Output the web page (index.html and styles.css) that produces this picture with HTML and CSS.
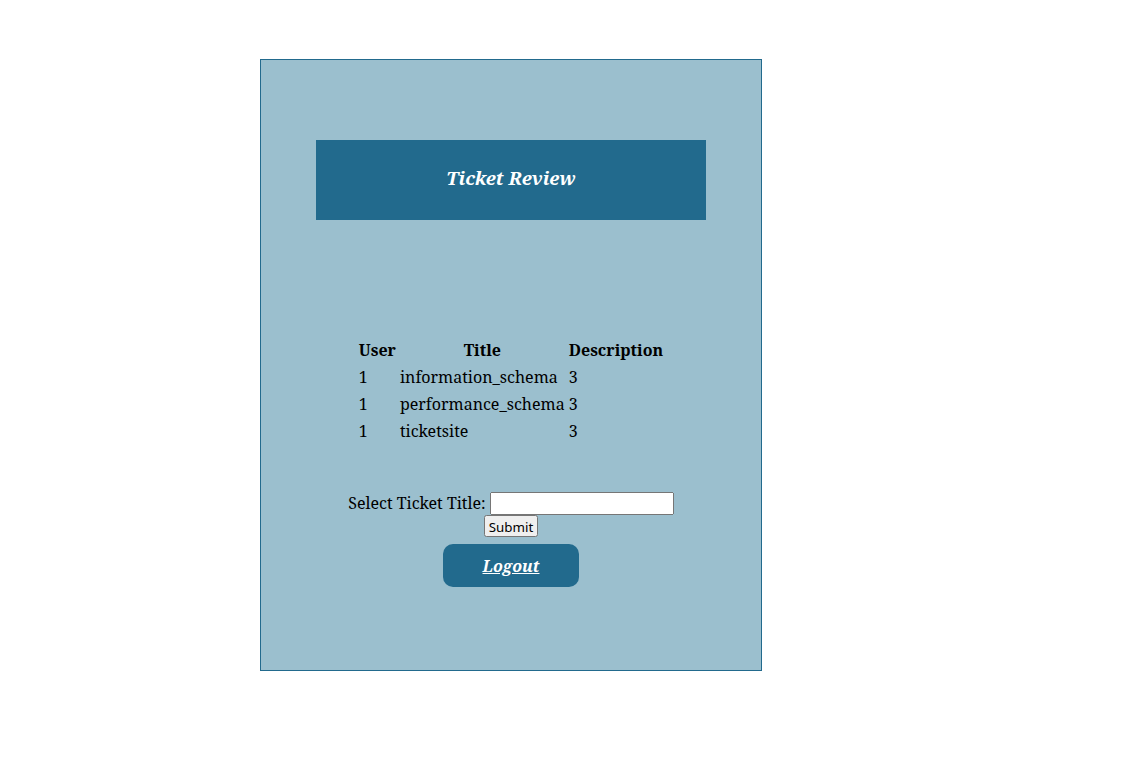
FILE: index.html
```html
<!DOCTYPE html>
<html>
<head>
<meta charset="utf-8">
<title>Ticket Review</title>
<link rel="stylesheet" href="styles.css">
</head>
<body>
<div class="panel">
  <div class="banner"><h1 class="banner-title">Ticket Review</h1></div>
  <table class="tickets">
    <thead>
      <tr><th>User</th><th>Title</th><th>Description</th></tr>
    </thead>
    <tbody>
      <tr><td>1</td><td>information_schema</td><td>3</td></tr>
      <tr><td>1</td><td>performance_schema</td><td>3</td></tr>
      <tr><td>1</td><td>ticketsite</td><td>3</td></tr>
    </tbody>
  </table>
  <form class="select-form">
    <div class="form-row"><label class="select-label">Select Ticket Title: <input type="text" class="select-input"></label></div>
    <div class="form-row submit-row"><input type="submit" value="Submit" class="submit-btn"></div>
  </form>
  <div class="logout-wrap"><a href="#" class="logout">Logout</a></div>
</div>
</body>
</html>
```
FILE: styles.css
```css
html, body {
  margin: 0;
  padding: 0;
  background: #ffffff;
}
body {
  padding: 59px 0 0 260px;
  font-family: "Noto Serif", "DejaVu Serif", serif;
  font-size: 16px;
  color: #000;
}
.panel {
  width: 500px;
  height: 610px;
  border: 1px solid #226a8d;
  background: #9bbfce;
  box-sizing: content-box;
}
.banner {
  width: 390px;
  height: 80px;
  margin: 80px auto 0;
  background: #226a8d;
  display: flex;
  align-items: center;
  justify-content: center;
  box-sizing: border-box;
  padding-bottom: 6px;
}
.banner-title {
  margin: 0;
  color: #ffffff;
  font-size: 18.72px;
  font-weight: bold;
  font-style: italic;
}
.tickets {
  margin: 116px auto 0;
  border-spacing: 2px;
}
.tickets th, .tickets td {
  padding: 1px;
  line-height: 23px;
}
.tickets td {
  text-align: left;
}
.select-form {
  margin-top: 46px;
  text-align: center;
}
.form-row {
  line-height: 22px;
}
.select-input {
  width: 184px;
  height: 23px;
  box-sizing: border-box;
  margin: 0;
  vertical-align: 1px;
}
.submit-btn {
  font-family: "Noto Sans", "Open Sans", sans-serif;
  font-size: 13.33px;
  line-height: 16px;
  padding: 1px 3px;
  margin: 0;
  height: 22px;
  box-sizing: border-box;
}
.logout-wrap {
  display: flex;
  justify-content: center;
  margin-top: 7px;
}
.logout {
  display: flex;
  align-items: center;
  justify-content: center;
  width: 136px;
  height: 43px;
  border-radius: 10px;
  background: #226a8d;
  color: #ffffff;
  font-weight: bold;
  font-style: italic;
  font-size: 16px;
  text-decoration: underline;
}
```
